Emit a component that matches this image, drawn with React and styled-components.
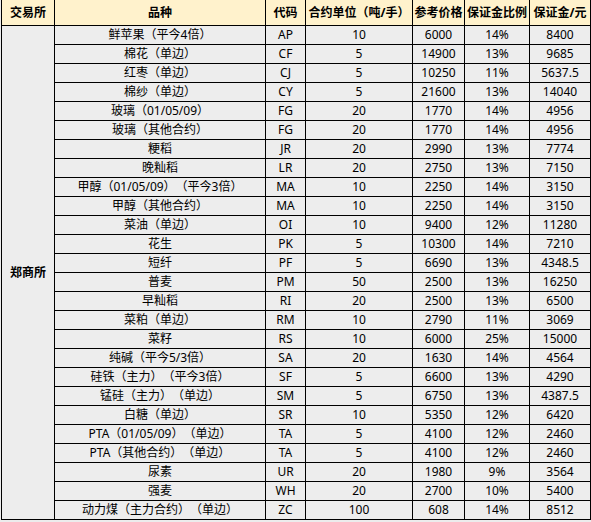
import React from 'react'
import styled, {createGlobalStyle} from 'styled-components'

const GlobalStyle = createGlobalStyle`
    html, body {
        margin: 0;
        padding: 0;
        background: #ececec;
    }
    body {
        font-family: "Noto Sans", "Noto Sans CJK SC", sans-serif;
        font-size: 12px;
        color: #000;
        text-spacing-trim: space-all;
    }
`

const Sheet = styled.div`
    padding-left: 1px;
`

const Table = styled.table`
    border-collapse: collapse;
    table-layout: fixed;
    width: 589px;
`

const HeadCell = styled.th`
    height: 25px;
    padding: 0;
    background: #fff2cc;
    border: 1px solid #000;
    border-top: none;
    font-weight: bold;
    font-size: 12px;
    line-height: 25px;
    text-align: center;
    white-space: nowrap;
    overflow: hidden;
`

const Cell = styled.td`
    height: 18px;
    padding: 0;
    background: #ededed;
    border: 1px solid #000;
    line-height: 18px;
    text-align: center;
    white-space: nowrap;
    overflow: hidden;
`

const ExchangeCell = styled(Cell)`
    font-weight: bold;
    vertical-align: middle;
`

const columns = [
    {title: '交易所', width: 53},
    {title: '品种', width: 211},
    {title: '代码', width: 40},
    {title: '合约单位（吨/手）', width: 107},
    {title: '参考价格', width: 52},
    {title: '保证金比例', width: 65},
    {title: '保证金/元', width: 61},
]

const rows = [
    ['鲜苹果（平今4倍）', 'AP', '10', '6000', '14%', '8400'],
    ['棉花（单边）', 'CF', '5', '14900', '13%', '9685'],
    ['红枣（单边）', 'CJ', '5', '10250', '11%', '5637.5'],
    ['棉纱（单边）', 'CY', '5', '21600', '13%', '14040'],
    ['玻璃（01/05/09）', 'FG', '20', '1770', '14%', '4956'],
    ['玻璃（其他合约）', 'FG', '20', '1770', '14%', '4956'],
    ['粳稻', 'JR', '20', '2990', '13%', '7774'],
    ['晚籼稻', 'LR', '20', '2750', '13%', '7150'],
    ['甲醇（01/05/09）（平今3倍）', 'MA', '10', '2250', '14%', '3150'],
    ['甲醇（其他合约）', 'MA', '10', '2250', '14%', '3150'],
    ['菜油（单边）', 'OI', '10', '9400', '12%', '11280'],
    ['花生', 'PK', '5', '10300', '14%', '7210'],
    ['短纤', 'PF', '5', '6690', '13%', '4348.5'],
    ['普麦', 'PM', '50', '2500', '13%', '16250'],
    ['早籼稻', 'RI', '20', '2500', '13%', '6500'],
    ['菜粕（单边）', 'RM', '10', '2790', '11%', '3069'],
    ['菜籽', 'RS', '10', '6000', '25%', '15000'],
    ['纯碱（平今5/3倍）', 'SA', '20', '1630', '14%', '4564'],
    ['硅铁（主力）（平今3倍）', 'SF', '5', '6600', '13%', '4290'],
    ['锰硅（主力）（单边）', 'SM', '5', '6750', '13%', '4387.5'],
    ['白糖（单边）', 'SR', '10', '5350', '12%', '6420'],
    ['PTA（01/05/09）（单边）', 'TA', '5', '4100', '12%', '2460'],
    ['PTA（其他合约）（单边）', 'TA', '5', '4100', '12%', '2460'],
    ['尿素', 'UR', '20', '1980', '9%', '3564'],
    ['强麦', 'WH', '20', '2700', '10%', '5400'],
    ['动力煤（主力合约）（单边）', 'ZC', '100', '608', '14%', '8512'],
]

const App = () => (
    <Sheet>
        <GlobalStyle />
        <Table>
            <colgroup>
                {columns.map(col => <col key={col.title} style={{width: col.width}} />)}
            </colgroup>
            <thead>
                <tr>
                    {columns.map(col => <HeadCell key={col.title}>{col.title}</HeadCell>)}
                </tr>
            </thead>
            <tbody>
                {rows.map((row, i) => (
                    <tr key={i}>
                        {i === 0 && <ExchangeCell rowSpan={rows.length}>郑商所</ExchangeCell>}
                        {row.map((value, j) => <Cell key={j}>{value}</Cell>)}
                    </tr>
                ))}
            </tbody>
        </Table>
    </Sheet>
)

export default App
